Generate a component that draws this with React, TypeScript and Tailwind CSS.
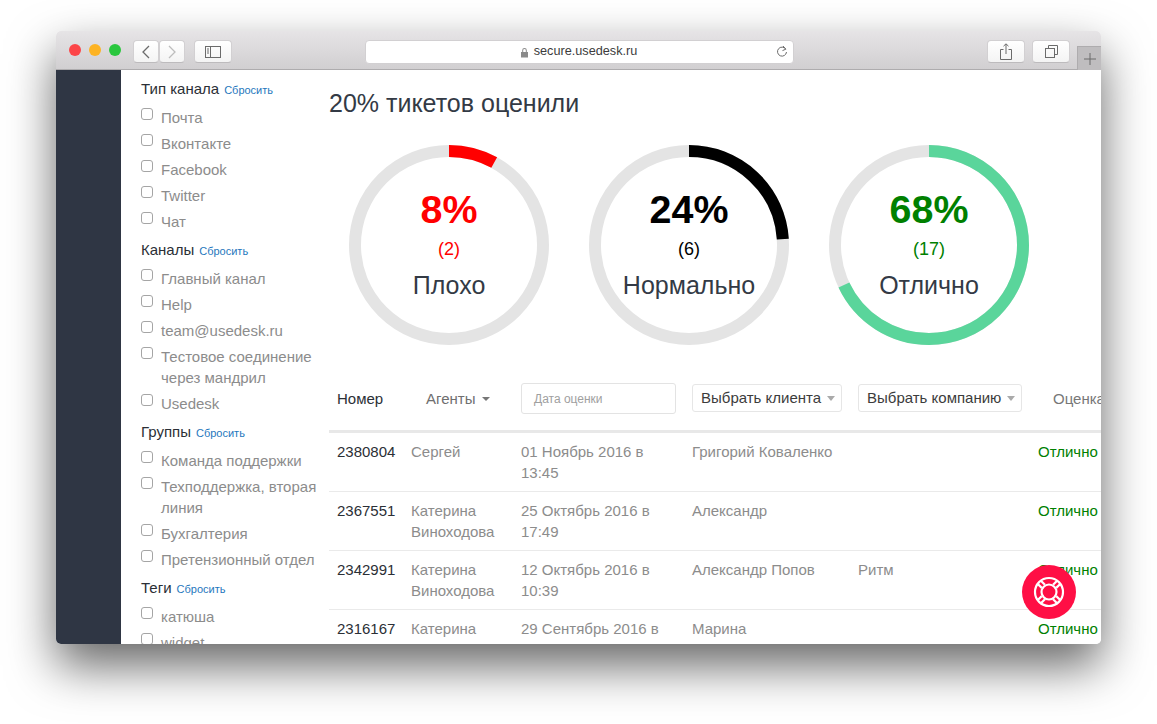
const sans = "font-['Liberation_Sans',Arial,sans-serif]";

const filters = [
  { title: "Тип канала", items: ["Почта", "Вконтакте", "Facebook", "Twitter", "Чат"] },
  {
    title: "Каналы",
    items: ["Главный канал", "Help", "team@usedesk.ru", "Тестовое соединение через мандрил", "Usedesk"],
  },
  {
    title: "Группы",
    items: ["Команда поддержки", "Техподдержка, вторая линия", "Бухгалтерия", "Претензионный отдел"],
  },
  { title: "Теги", items: ["катюша", "widget"] },
];

const rows = [
  ["2380804", "Сергей", "01 Ноябрь 2016 в 13:45", "Григорий Коваленко", ""],
  ["2367551", "Катерина Виноходова", "25 Октябрь 2016 в 17:49", "Александр", ""],
  ["2342991", "Катерина Виноходова", "12 Октябрь 2016 в 10:39", "Александр Попов", "Ритм"],
  ["2316167", "Катерина Виноходова", "29 Сентябрь 2016 в 12:10", "Марина", ""],
];

const gridCols = "grid grid-cols-[74px_110px_171px_166px_180px_92px]";

function Gauge({
  value,
  count,
  label,
  color,
  textColor,
}: {
  value: number;
  count: number;
  label: string;
  color: string;
  textColor: string;
}) {
  return (
    <div className="relative h-[200px] w-[200px]">
      <svg viewBox="0 0 200 200" className="h-full w-full -rotate-90">
        <circle cx="100" cy="100" r="94" fill="none" stroke="#e4e4e4" strokeWidth="12" />
        <circle
          cx="100"
          cy="100"
          r="94"
          fill="none"
          stroke={color}
          strokeWidth="12"
          pathLength={100}
          strokeDasharray={`${value} 100`}
        />
      </svg>
      <div className="absolute inset-0 flex flex-col items-center pt-[41px]">
        <div className="text-[39.4px] leading-[46px] font-bold" style={{ color: textColor }}>
          {value}%
        </div>
        <div className="mt-[6px] text-[18px] leading-[22px]" style={{ color: textColor }}>
          ({count})
        </div>
        <div className="mt-[10px] text-[25px] leading-[30px] text-[#333a45]">{label}</div>
      </div>
    </div>
  );
}

function ToolButton({ className, children }: { className: string; children: React.ReactNode }) {
  return (
    <div
      className={`flex h-[23px] items-center justify-center rounded-[4px] border border-[#d2d0d2] border-b-[#bdbbbd] bg-gradient-to-b from-white to-[#f4f4f4] ${className}`}
    >
      {children}
    </div>
  );
}

function Toolbar() {
  return (
    <div className="flex h-[39px] shrink-0 items-start border-b border-[#aeacae] bg-gradient-to-b from-[#e6e4e6] to-[#d1cfd1] pt-[9px]">
      <div className="ml-[13px] flex items-center gap-[8px] pt-[4px]">
        <div className="h-[12px] w-[12px] rounded-full bg-[#fc4548]" />
        <div className="h-[12px] w-[12px] rounded-full bg-[#fdb323]" />
        <div className="h-[12px] w-[12px] rounded-full bg-[#2ac73e]" />
      </div>
      <ToolButton className="ml-[12px] w-[26px]">
        <svg width="10" height="16" viewBox="0 0 10 16" fill="none" stroke="#6b6b6b" strokeWidth="1.3">
          <path d="M8 2 2 8l6 6" />
        </svg>
      </ToolButton>
      <ToolButton className="w-[26px]">
        <svg width="10" height="16" viewBox="0 0 10 16" fill="none" stroke="#bdbdbd" strokeWidth="1.3">
          <path d="m2 2 6 6-6 6" />
        </svg>
      </ToolButton>
      <ToolButton className="ml-[9px] w-[38px]">
        <svg width="16" height="12" viewBox="0 0 16 12" fill="none" stroke="#6b6b6b" strokeWidth="1">
          <rect x="0.5" y="0.5" width="15" height="11" />
          <path d="M5.5 0.5v11M2 3h2M2 5h2M2 7h2" />
        </svg>
      </ToolButton>
      <div className="relative ml-[133px] flex h-[24px] w-[429px] items-center justify-center rounded-[4px] border border-[#d2d0d2] bg-white pr-[2px] text-[12.7px] text-[#3c3c3c]">
        <svg width="9" height="11" viewBox="0 0 9 11" className="mr-[5px]" fill="#8a8a8a">
          <path d="M1 5h7v5.5H1zM2.2 5V3.2a2.3 2.3 0 0 1 4.6 0V5h-1V3.2a1.3 1.3 0 0 0-2.6 0V5z" />
        </svg>
        secure.usedesk.ru
        <svg
          width="12"
          height="13"
          viewBox="0 0 12 13"
          className="absolute right-[5px] top-[4px]"
          fill="none"
          stroke="#6b6b6b"
          strokeWidth="1"
        >
          <path d="M9.8 4.2A4.5 4.5 0 1 0 10.5 7M7 1l2.8 3.2L6.5 5.6" />
        </svg>
      </div>
      <ToolButton className="ml-[193px] w-[38px]">
        <svg width="12" height="17" viewBox="0 0 12 17" fill="none" stroke="#6b6b6b" strokeWidth="1">
          <path d="M3.5 6.5h-3v10h11v-10h-3M6 11V1M3.5 3.2 6 .8l2.5 2.4" />
        </svg>
      </ToolButton>
      <ToolButton className="ml-[7px] w-[38px]">
        <svg width="13" height="13" viewBox="0 0 13 13" fill="none" stroke="#6b6b6b" strokeWidth="1">
          <rect x="0.5" y="3.5" width="9" height="9" />
          <path d="M3.5 3.5v-3h9v9h-3" />
        </svg>
      </ToolButton>
      <div className="ml-[7px] mt-[6px] flex h-[25px] flex-1 items-center justify-center border-t border-l border-[#aeacae] bg-[#bfbdbf]">
        <svg width="12" height="12" viewBox="0 0 12 12" stroke="#6a6a6a" strokeWidth="1">
          <path d="M6 0v12M0 6h12" />
        </svg>
      </div>
    </div>
  );
}

function Filters() {
  return (
    <aside className="w-[208px] shrink-0 pl-[20px] pt-[8px]">
      {filters.map((group) => (
        <div key={group.title} className="mb-[7px]">
          <div className="mb-[8px] flex h-[21px] items-baseline gap-[5px] text-[15px] leading-[21px] text-[#2b2f36]">
            {group.title}
            <span className="text-[11px] text-[#1f77bd]">Сбросить</span>
          </div>
          {group.items.map((item) => (
            <div key={item} className="mb-[5px] flex text-[15px] leading-[21px] text-[#8c8c8c]">
              <span className="mt-[1px] h-[12px] w-[12px] shrink-0 rounded-[3px] border border-[#a5a5a5] bg-white" />
              <span className="ml-[8px] w-[160px]">{item}</span>
            </div>
          ))}
        </div>
      ))}
    </aside>
  );
}

function TableHeader() {
  return (
    <div className={`${gridCols} h-[58px] items-center border-b-[3px] border-[#e8e8e8] pb-[8px] text-[15px]`}>
      <div className="mt-[1px] px-[8px] text-[#2b2f36]">Номер</div>
      <div className="mt-[1px] flex items-center pl-[23px] text-[#6f6f6f]">
        Агенты
        <span className="ml-[7px] h-0 w-0 border-x-[4px] border-t-[4px] border-x-transparent border-t-[#777]" />
      </div>
      <div className="px-[8px]">
        <div className="flex h-[31px] w-[155px] items-center rounded-[3px] border border-[#e3e3e3] pl-[12px] text-[12px] text-[#a0a0a0]">
          Дата оценки
        </div>
      </div>
      <div className="px-[8px]">
        <div className="-mt-[1px] flex h-[28px] w-[150px] items-center justify-between rounded-[3px] border border-[#e6e6e6] pr-[6px] pl-[8px] text-[#3c3c3c]">
          Выбрать клиента
          <span className="h-0 w-0 border-x-[4px] border-t-[5px] border-x-transparent border-t-[#aaa]" />
        </div>
      </div>
      <div className="px-[8px]">
        <div className="-mt-[1px] flex h-[28px] w-[164px] items-center justify-between rounded-[3px] border border-[#e6e6e6] pr-[6px] pl-[8px] text-[#3c3c3c]">
          Выбрать компанию
          <span className="h-0 w-0 border-x-[4px] border-t-[5px] border-x-transparent border-t-[#aaa]" />
        </div>
      </div>
      <div className="mt-[1px] whitespace-nowrap pl-[23px] text-[#777]">Оценка</div>
    </div>
  );
}

export default function App() {
  return (
    <div className={`${sans} h-[724px] w-[1157px] overflow-hidden bg-white pl-[56px] pt-[31px]`}>
      <div className="relative flex h-[613px] w-[1045px] flex-col overflow-hidden rounded-[5px] shadow-[0_22px_48px_rgba(0,0,0,0.6)]">
        <Toolbar />
        <div className="flex min-h-0 flex-1 bg-white">
          <div className="w-[65px] shrink-0 bg-[#2f3644]" />
          <Filters />
          <main className="min-w-0 flex-1 overflow-hidden">
            <h1 className="mt-[18px] h-[30px] text-[25px] leading-[30px] text-[#333a45]">20% тикетов оценили</h1>
            <div className="mt-[27px] flex gap-[40px] pl-[20px]">
              <Gauge value={8} count={2} label="Плохо" color="#ff0000" textColor="#ff0000" />
              <Gauge value={24} count={6} label="Нормально" color="#000000" textColor="#000000" />
              <Gauge value={68} count={17} label="Отлично" color="#5ad59b" textColor="#008000" />
            </div>
            <div className="mt-[30px] w-[793px]">
              <TableHeader />
              {rows.map((row) => (
                <div
                  key={row[0]}
                  className={`${gridCols} h-[59px] border-b border-[#eaeaea] pt-[8px] text-[15px] leading-[21px] text-[#8c8c8c]`}
                >
                  <div className="px-[8px] text-[#2b2f36]">{row[0]}</div>
                  <div className="px-[8px]">{row[1]}</div>
                  <div className="px-[8px]">{row[2]}</div>
                  <div className="px-[8px]">{row[3]}</div>
                  <div className="px-[8px]">{row[4]}</div>
                  <div className="px-[8px] text-[#008000]">Отлично</div>
                </div>
              ))}
            </div>
          </main>
        </div>
        <button className="absolute left-[966px] top-[534px] flex h-[54px] w-[54px] items-center justify-center rounded-full bg-[#ff0f45]">
          <svg width="34" height="34" viewBox="0 0 34 34" fill="none" stroke="#fff" strokeWidth="2.2">
            <circle cx="17" cy="17" r="14" />
            <circle cx="17" cy="17" r="7.5" />
            <path d="M8.66 5.54 12.9 9.78M5.54 8.66 9.78 12.9M25.34 5.54 21.1 9.78M28.46 8.66 24.22 12.9M8.66 28.46 12.9 24.22M5.54 25.34 9.78 21.1M25.34 28.46 21.1 24.22M28.46 25.34 24.22 21.1" />
          </svg>
        </button>
      </div>
    </div>
  );
}
